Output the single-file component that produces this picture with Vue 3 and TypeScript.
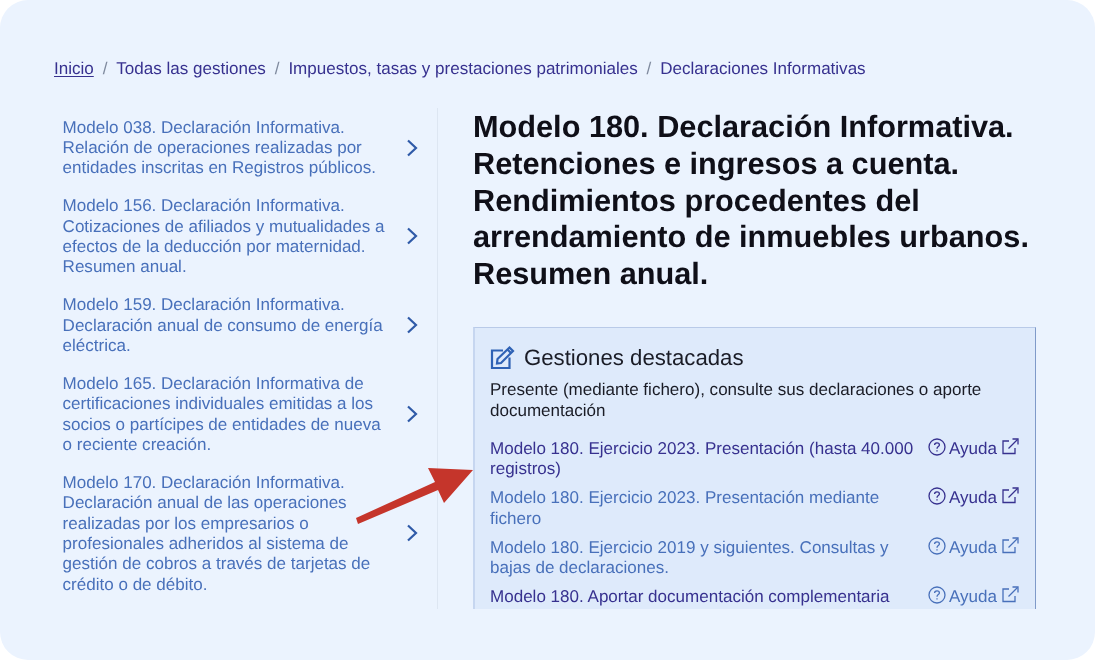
<script setup lang="ts">
const crumbs = ['Todas las gestiones', 'Impuestos, tasas y prestaciones patrimoniales', 'Declaraciones Informativas']
const side = [
  ['Modelo 038. Declaración Informativa.', 'Relación de operaciones realizadas por', 'entidades inscritas en Registros públicos.'],
  ['Modelo 156. Declaración Informativa.', 'Cotizaciones de afiliados y mutualidades a', 'efectos de la deducción por maternidad.', 'Resumen anual.'],
  ['Modelo 159. Declaración Informativa.', 'Declaración anual de consumo de energía', 'eléctrica.'],
  ['Modelo 165. Declaración Informativa de', 'certificaciones individuales emitidas a los', 'socios o partícipes de entidades de nueva', 'o reciente creación.'],
  ['Modelo 170. Declaración Informativa.', 'Declaración anual de las operaciones', 'realizadas por los empresarios o', 'profesionales adheridos al sistema de', 'gestión de cobros a través de tarjetas de', 'crédito o de débito.'],
]
const title = ['Modelo 180. Declaración Informativa.', 'Retenciones e ingresos a cuenta.', 'Rendimientos procedentes del', 'arrendamiento de inmuebles urbanos.', 'Resumen anual.']
const rows = [
  { lines: ['Modelo 180. Ejercicio 2023. Presentación (hasta 40.000', 'registros)'], dark: true, help: true },
  { lines: ['Modelo 180. Ejercicio 2023. Presentación mediante', 'fichero'], dark: false, help: true },
  { lines: ['Modelo 180. Ejercicio 2019 y siguientes. Consultas y', 'bajas de declaraciones.'], dark: false, help: false },
  { lines: ['Modelo 180. Aportar documentación complementaria'], dark: true, help: false },
]
</script>

<template>
  <div class="page">
    <div class="sheet">
      <nav class="crumbs">
        <a class="home">Inicio</a>
        <template v-for="c in crumbs" :key="c">
          <span class="sep">/</span>
          <a>{{ c }}</a>
        </template>
      </nav>
      <div class="columns">
        <aside class="side">
          <a v-for="(item, i) in side" :key="i" class="side-item">
            <span class="side-text"><span v-for="l in item" :key="l" class="line">{{ l }}</span></span>
            <svg class="chev" width="12" height="18" viewBox="0 0 12 18" fill="none" stroke="#2f5aa8" stroke-width="2.2"><path d="M2 1.5 L10 9 L2 16.5" /></svg>
          </a>
        </aside>
        <main class="main">
          <h1 class="title"><span v-for="l in title" :key="l" class="line">{{ l }}</span></h1>
          <section class="box">
            <h2 class="box-head">
              <svg width="25" height="25" viewBox="0 0 25 25" fill="none" stroke="#2f62b5" stroke-width="2.2"><path d="M13 5.5 H2 V23 H19.5 V12.5" /><path d="M7.5 14 L19.5 2.5 L23 6 L11 18 L7 18.5 Z" /><path d="M17.5 4.5 L21 8" /></svg>
              Gestiones destacadas
            </h2>
            <p class="box-sub">Presente (mediante fichero), consulte sus declaraciones o aporte<br />documentación</p>
            <ul class="rows">
              <li v-for="(r, i) in rows" :key="i" class="row">
                <a class="row-text" :class="{ dark: r.dark }"><span v-for="l in r.lines" :key="l" class="line">{{ l }}</span></a>
                <a class="help" :class="{ dark: r.help }">
                  <svg width="18" height="18" viewBox="0 0 18 18" fill="none" stroke="currentColor" stroke-width="1.3"><circle cx="9" cy="9" r="8" /><path d="M6.6 7 C6.6 5.6 7.7 4.8 9 4.8 C10.4 4.8 11.4 5.7 11.4 6.9 C11.4 8.6 9 8.6 9 10.7" /><path d="M9 12.2 V13.6" /></svg>
                  <span>Ayuda</span>
                  <svg width="17" height="17" viewBox="0 0 17 17" fill="none" stroke="currentColor" stroke-width="1.3"><path d="M7 3 H1 V15.5 H13 V10" /><path d="M6.5 10.5 L15.5 1.5" /><path d="M10.5 1 H16 V6.5" /></svg>
                </a>
              </li>
            </ul>
          </section>
        </main>
      </div>
      <svg class="arrow" width="130" height="70" viewBox="0 0 130 70"><path d="M6 62 L85 26 L78 12 L123 14 L94 47 L88 34 L8 68 Z" fill="#c5352b" /></svg>
    </div>
  </div>
</template>

<style scoped>
.page { width: 1095px; height: 660px; background: #fff; overflow: hidden; }
.sheet { position: relative; width: 1095px; height: 660px; background: #ebf3fe; border-radius: 28px; padding: 59px 0 0 54px; box-sizing: border-box; font-family: "Liberation Sans", Arial, sans-serif; text-rendering: geometricPrecision; filter: blur(0.35px); }
.crumbs { display: flex; gap: 8.9px; font-size: 17.04px; line-height: 20px; color: #37318f; }
.home { text-decoration: underline; text-underline-offset: 2px; }
.sep { color: #7f8a9e; }
.columns { display: flex; margin-top: 29px; height: 501px; overflow: hidden; }
.side { width: 384px; box-sizing: border-box; border-right: 1px solid #dde6f2; padding: 9.5px 18px 0 8.6px; flex: none; }
.side-item { display: flex; align-items: center; justify-content: space-between; margin-bottom: 17.4px; color: #4870ba; font-size: 17.04px; line-height: 20.4px; }
.line { display: block; white-space: nowrap; }
.chev { flex: none; margin: -1px 1px 0 0; }
.main { padding-left: 35px; width: 563px; flex: none; }
.title { margin: 0; padding-top: 1px; font-size: 30.7px; line-height: 36.8px; font-weight: 700; color: #0f0f18; }
.box { margin-top: 34px; border: 1px solid #b9cae8; border-right-color: #7f9ac9; border-left: 2px solid #c6d6f0; background: #deeafb; padding: 15px 16px 0 15px; height: 300px; box-sizing: content-box; }
.box-head { margin: 0; display: flex; align-items: center; gap: 9px; font-size: 22.2px; line-height: 30px; font-weight: 400; color: #1a1c26; }
.box-sub { margin: 7.5px 0 0; font-size: 17.04px; line-height: 20.2px; color: #1a1c26; }
.rows { list-style: none; margin: 18.2px 0 0; padding: 0; }
.row { display: flex; justify-content: space-between; margin-bottom: 8.5px; font-size: 17.04px; line-height: 20.4px; }
.row-text { color: #4870ba; }
.row-text.dark { color: #37318f; }
.help { display: flex; align-items: flex-start; gap: 3.5px; color: #4870ba; flex: none; }
.help svg:first-child { margin: -1px 0 0 -1px; }
.help svg:last-child { margin: -1px 0 0 1.5px; }
.help.dark { color: #37318f; }
.arrow { position: absolute; left: 350px; top: 456px; }
</style>
